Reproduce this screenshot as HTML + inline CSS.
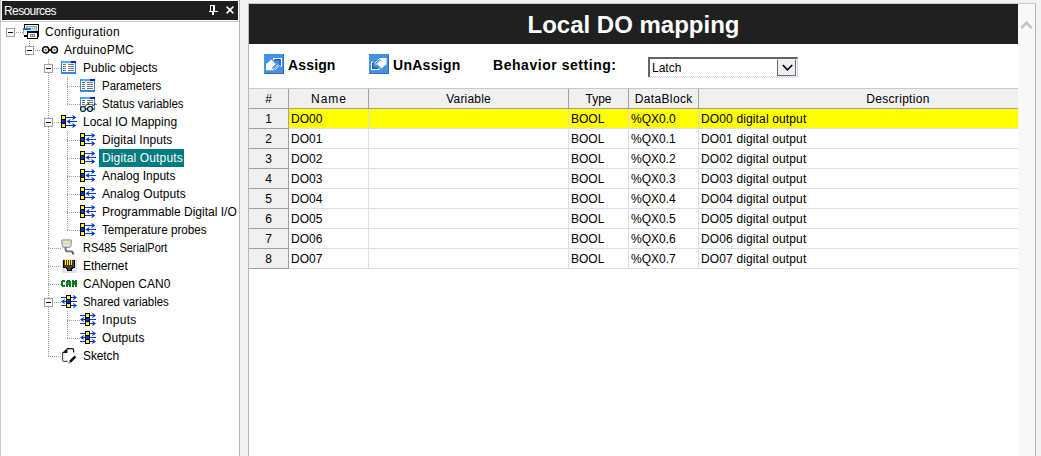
<!DOCTYPE html>
<html><head><meta charset="utf-8"><style>
html,body{margin:0;padding:0;}
body{width:1041px;height:456px;overflow:hidden;position:relative;background:#f2f2f2;font-family:"Liberation Sans",sans-serif;}
div{box-sizing:border-box;}
#lp{position:absolute;left:0;top:0;width:239px;height:456px;background:#fff;border-left:1px solid #c8c8c8;}
#lphead{position:absolute;left:2px;top:1px;width:236px;height:19px;background:#1f1f1f;color:#fff;font-size:12px;line-height:19px;padding-left:2px;padding-top:1px;}
#lpborder{position:absolute;left:239px;top:0px;width:1px;height:456px;background:#b8b8b8;}
#lptop{position:absolute;left:1px;top:21px;width:238px;height:1px;background:#c8c8c8;}
.ebox{position:absolute;width:9px;height:9px;border:1px solid #a0a0a0;background:#fff;}
.ebox i{position:absolute;left:1px;top:3px;width:5px;height:1px;background:#000;}
.hd{position:absolute;height:1px;background-image:linear-gradient(90deg,#a0a0a0 50%,transparent 50%);background-size:2px 1px;}
.vd{position:absolute;width:1px;background-image:linear-gradient(180deg,#a0a0a0 50%,transparent 50%);background-size:1px 2px;}
.ic{position:absolute;line-height:0;}
.ic svg{display:block;}
.tt{position:absolute;height:18px;line-height:18px;font-size:12px;color:#000;padding:0 2px 0 3px;white-space:nowrap;}
.tt.sel{background:#007b80;color:#fff;padding-right:1px;}
#rp{position:absolute;left:248px;top:3px;width:788px;height:453px;background:#fff;border-left:1px solid #b8b8b8;border-top:1px solid #c8c8c8;border-right:1px solid #b0b0b0;}
#title{position:absolute;left:249px;top:4px;width:769px;height:40px;background:#202020;color:#fff;font-weight:bold;font-size:24px;text-align:center;line-height:40px;padding-top:1px;}
#sb{position:absolute;left:1018px;top:4px;width:17px;height:452px;background:#f8f8f8;}
.tb{position:absolute;font-weight:bold;font-size:14px;color:#000;line-height:16px;white-space:nowrap;}
.btnic{position:absolute;width:20px;height:20px;}
#dd{position:absolute;left:648px;top:57px;width:150px;height:20px;background:#fff;border-top:2px solid #646460;border-left:2px solid #646460;border-right:1px solid #d0d8e6;}
#ddbot{position:absolute;left:650px;top:76px;width:148px;height:2px;background-image:linear-gradient(45deg,#c8d0e2 25%,transparent 25%,transparent 75%,#c8d0e2 75%),linear-gradient(45deg,#c8d0e2 25%,transparent 25%,transparent 75%,#c8d0e2 75%);background-size:2px 2px;background-position:0 0,1px 1px;}
#ddt{position:absolute;left:2px;top:2px;font-size:12px;line-height:14px;}
#ddb{position:absolute;left:127px;top:0px;width:19px;height:17px;background:#efefef;border:1px solid #6e6e6e;border-top-color:#f4f4f4;}
.th{position:absolute;top:89px;height:20px;padding-top:1px;background:#f0f0f0;border-right:1px solid #a0a0a0;border-bottom:1px solid #a0a0a0;font-size:12px;line-height:19px;text-align:center;white-space:nowrap;}
#thtop{position:absolute;left:249px;top:88px;width:769px;height:1px;background:#c8c8c8;}
.rh{position:absolute;left:249px;width:40px;height:20px;background:#f0f0f0;border-right:1px solid #a0a0a0;border-bottom:1px solid #a0a0a0;font-size:12px;line-height:19px;text-align:center;padding-top:1px;}
.td{position:absolute;height:20px;border-right:1px solid #d8dfea;border-bottom:1px solid #d8dfea;font-size:12px;line-height:19px;padding-left:2px;padding-top:1px;white-space:nowrap;overflow:hidden;}
.td.y{background:#ffff00;}
</style></head><body>
<div id="lp"></div>
<div id="lphead" style="letter-spacing:-0.6px">Resources</div>
<svg style="position:absolute;left:209px;top:5px" width="9" height="10" viewBox="0 0 9 10" shape-rendering="crispEdges">
<rect x="1" y="0" width="5" height="1" fill="#fff"/><rect x="1" y="0" width="1" height="6" fill="#fff"/><rect x="4" y="0" width="2" height="6" fill="#fff"/>
<rect x="0" y="6" width="9" height="1" fill="#fff"/><rect x="3" y="7" width="2" height="3" fill="#fff"/>
</svg>
<svg style="position:absolute;left:226px;top:6px" width="8" height="8" viewBox="0 0 8 8">
<path d="M0.6 0.6 L7.4 7.4 M7.4 0.6 L0.6 7.4" stroke="#fff" stroke-width="1.5"/>
</svg>
<div id="lptop"></div>
<div id="lpborder"></div>
<div class="hd" style="left:10px;top:32px;width:13px"></div>
<div class="hd" style="left:29px;top:50px;width:13px"></div>
<div class="hd" style="left:48px;top:68px;width:13px"></div>
<div class="hd" style="left:67px;top:86px;width:13px"></div>
<div class="hd" style="left:67px;top:104px;width:13px"></div>
<div class="hd" style="left:48px;top:122px;width:13px"></div>
<div class="hd" style="left:67px;top:140px;width:13px"></div>
<div class="hd" style="left:67px;top:158px;width:13px"></div>
<div class="hd" style="left:67px;top:176px;width:13px"></div>
<div class="hd" style="left:67px;top:194px;width:13px"></div>
<div class="hd" style="left:67px;top:212px;width:13px"></div>
<div class="hd" style="left:67px;top:230px;width:13px"></div>
<div class="hd" style="left:48px;top:248px;width:13px"></div>
<div class="hd" style="left:48px;top:266px;width:13px"></div>
<div class="hd" style="left:48px;top:284px;width:13px"></div>
<div class="hd" style="left:48px;top:302px;width:13px"></div>
<div class="hd" style="left:67px;top:320px;width:13px"></div>
<div class="hd" style="left:67px;top:338px;width:13px"></div>
<div class="hd" style="left:48px;top:356px;width:13px"></div>
<div class="vd" style="left:29px;top:41px;height:10px"></div>
<div class="vd" style="left:48px;top:59px;height:298px"></div>
<div class="vd" style="left:67px;top:77px;height:28px"></div>
<div class="vd" style="left:67px;top:131px;height:100px"></div>
<div class="vd" style="left:67px;top:311px;height:28px"></div>
<div class="ebox" style="left:6px;top:28px"><i></i></div>
<div class="ic" style="left:23px;top:24px"><svg width="16" height="15" viewBox="0 0 16 15" shape-rendering="crispEdges">
<rect x="1" y="0" width="15" height="13" fill="#000"/>
<rect x="2" y="1" width="13" height="11" fill="#f0f0f0"/>
<rect x="3" y="2" width="11" height="9" fill="#a0a0a0"/>
<rect x="4" y="3" width="9" height="1" fill="#a8f6f6"/>
<rect x="4" y="4" width="9" height="3" fill="#b8e8e8"/>
<rect x="9" y="4" width="1" height="1" fill="#909090"/><rect x="11" y="4" width="1" height="1" fill="#909090"/>
<rect x="0" y="4" width="8" height="2" fill="#1a78d0"/>
<rect x="0" y="6" width="1" height="5" fill="#b0b0b0"/>
<rect x="1" y="6" width="7" height="5" fill="#fafafa"/>
<rect x="1" y="11" width="4" height="1" fill="#000"/>
<rect x="4" y="7" width="11" height="8" fill="#000"/>
<rect x="5" y="7" width="9" height="2" fill="#000070"/>
<rect x="5" y="9" width="9" height="5" fill="#f6f6f6"/>
<rect x="7" y="10" width="5" height="3" fill="#8a8a8a"/>
<rect x="8" y="11" width="1" height="1" fill="#ffff00"/>
<rect x="10" y="11" width="1" height="1" fill="#ffff00"/>
</svg></div>
<div class="tt" style="left:42px;top:23px;letter-spacing:0.267px">Configuration</div>
<div class="ebox" style="left:25px;top:46px"><i></i></div>
<div class="ic" style="left:42px;top:46px"><svg width="17" height="9" viewBox="0 0 17 9">
<rect x="6" y="3.3" width="5" height="1.6" fill="#000"/>
<circle cx="3.7" cy="3.9" r="3.1" fill="#fff" stroke="#0a0a0a" stroke-width="1.5"/>
<circle cx="12.35" cy="3.9" r="3.1" fill="#fff" stroke="#0a0a0a" stroke-width="1.5"/>
<circle cx="3.7" cy="3.9" r="1.7" fill="#dde3f0"/>
<circle cx="12.35" cy="3.9" r="1.7" fill="#dde3f0"/>
<circle cx="3.7" cy="3.9" r="1.0" fill="#707070"/>
<circle cx="12.35" cy="3.9" r="1.0" fill="#707070"/>
</svg></div>
<div class="tt" style="left:61px;top:41px;letter-spacing:0.189px">ArduinoPMC</div>
<div class="ebox" style="left:44px;top:64px"><i></i></div>
<div class="ic" style="left:61px;top:61px"><svg width="15" height="13" viewBox="0 0 15 13" shape-rendering="crispEdges">
<rect x="0" y="0" width="15" height="13" fill="#3088e4"/>
<rect x="1" y="0" width="9" height="2" fill="#58a8f4"/>
<rect x="10" y="0" width="5" height="2" fill="#0a1ec8"/>
<rect x="1" y="2" width="13" height="9" fill="#fff"/>
<rect x="3" y="2" width="9" height="1" fill="#d0f4f0"/>
<rect x="2" y="3" width="3" height="1" fill="#747a6c"/><rect x="7" y="3" width="6" height="1" fill="#747a6c"/>
<rect x="2" y="5" width="3" height="1" fill="#747a6c"/><rect x="7" y="5" width="6" height="1" fill="#747a6c"/>
<rect x="2" y="7" width="3" height="1" fill="#747a6c"/><rect x="7" y="7" width="6" height="1" fill="#747a6c"/>
<rect x="2" y="9" width="3" height="1" fill="#747a6c"/><rect x="7" y="9" width="6" height="1" fill="#747a6c"/>
</svg></div>
<div class="tt" style="left:80px;top:59px;letter-spacing:0.038px">Public objects</div>
<div class="ic" style="left:80px;top:79px"><svg width="15" height="13" viewBox="0 0 15 13" shape-rendering="crispEdges">
<rect x="0" y="0" width="15" height="13" fill="#3088e4"/>
<rect x="1" y="0" width="9" height="2" fill="#58a8f4"/>
<rect x="10" y="0" width="5" height="2" fill="#0a1ec8"/>
<rect x="1" y="2" width="13" height="9" fill="#fff"/>
<rect x="3" y="2" width="9" height="1" fill="#d0f4f0"/>
<rect x="2" y="3" width="3" height="1" fill="#747a6c"/><rect x="7" y="3" width="6" height="1" fill="#747a6c"/>
<rect x="2" y="5" width="3" height="1" fill="#747a6c"/><rect x="7" y="5" width="6" height="1" fill="#747a6c"/>
<rect x="2" y="7" width="3" height="1" fill="#747a6c"/><rect x="7" y="7" width="6" height="1" fill="#747a6c"/>
<rect x="2" y="9" width="3" height="1" fill="#747a6c"/><rect x="7" y="9" width="6" height="1" fill="#747a6c"/>
</svg></div>
<div class="tt" style="left:99px;top:77px;transform:scaleX(0.955);transform-origin:3px 0">Parameters</div>
<div class="ic" style="left:80px;top:97px"><svg width="17" height="16" viewBox="0 0 17 16">
<g shape-rendering="crispEdges">
<rect x="0" y="0" width="15" height="13" fill="#3088e4"/>
<rect x="1" y="0" width="9" height="2" fill="#58a8f4"/>
<rect x="10" y="0" width="5" height="2" fill="#0a1ec8"/>
<rect x="1" y="2" width="13" height="9" fill="#fff"/>
<rect x="2" y="3" width="3" height="1" fill="#707868"/><rect x="7" y="3" width="6" height="1" fill="#707868"/>
<rect x="2" y="5" width="3" height="1" fill="#707868"/><rect x="7" y="5" width="6" height="1" fill="#707868"/>
<rect x="2" y="7" width="3" height="1" fill="#707868"/><rect x="7" y="7" width="6" height="1" fill="#707868"/>
</g>
<path d="M4.5 10 L8 6.5 L9.5 7.3 M11.5 10 L15 6.8 L16.5 7.5" fill="none" stroke="#111" stroke-width="1"/>
<circle cx="3" cy="12" r="2.5" fill="#a8e4fa" stroke="#0a0a0a" stroke-width="1.1"/>
<circle cx="10" cy="12" r="2.5" fill="#a8e4fa" stroke="#0a0a0a" stroke-width="1.1"/>
</svg></div>
<div class="tt" style="left:99px;top:95px;transform:scaleX(0.955);transform-origin:3px 0">Status variables</div>
<div class="ebox" style="left:44px;top:118px"><i></i></div>
<div class="ic" style="left:61px;top:115px"><svg width="16" height="13" viewBox="0 0 16 13" shape-rendering="crispEdges">
<rect x="0" y="0" width="5" height="13" fill="#000"/>
<rect x="1" y="1" width="3" height="3" fill="#ffff00"/>
<rect x="1" y="5" width="3" height="3" fill="#0033dd"/>
<rect x="1" y="9" width="3" height="3" fill="#ffff00"/>
<g fill="#0838d8">
<rect x="5" y="2" width="9" height="1"/><path d="M11.2 -0.3 L15.4 2.5 L11.2 5.3 L12.2 2.5 Z" shape-rendering="auto"/>
<rect x="7" y="6" width="9" height="1"/><path d="M9.6 3.7 L5.4 6.5 L9.6 9.3 L8.6 6.5 Z" shape-rendering="auto"/>
<rect x="5" y="10" width="9" height="1"/><path d="M11.2 7.7 L15.4 10.5 L11.2 13.3 L12.2 10.5 Z" shape-rendering="auto"/>
</g>
</svg></div>
<div class="tt" style="left:80px;top:113px;letter-spacing:0.0px">Local IO Mapping</div>
<div class="ic" style="left:80px;top:133px"><svg width="16" height="13" viewBox="0 0 16 13" shape-rendering="crispEdges">
<rect x="0" y="0" width="5" height="13" fill="#000"/>
<rect x="1" y="1" width="3" height="3" fill="#ffff00"/>
<rect x="1" y="5" width="3" height="3" fill="#0033dd"/>
<rect x="1" y="9" width="3" height="3" fill="#ffff00"/>
<g fill="#0838d8">
<rect x="5" y="2" width="9" height="1"/><path d="M11.2 -0.3 L15.4 2.5 L11.2 5.3 L12.2 2.5 Z" shape-rendering="auto"/>
<rect x="7" y="6" width="9" height="1"/><path d="M9.6 3.7 L5.4 6.5 L9.6 9.3 L8.6 6.5 Z" shape-rendering="auto"/>
<rect x="5" y="10" width="9" height="1"/><path d="M11.2 7.7 L15.4 10.5 L11.2 13.3 L12.2 10.5 Z" shape-rendering="auto"/>
</g>
</svg></div>
<div class="tt" style="left:99px;top:131px;letter-spacing:0.077px">Digital Inputs</div>
<div class="ic" style="left:80px;top:151px"><svg width="16" height="13" viewBox="0 0 16 13" shape-rendering="crispEdges">
<rect x="0" y="0" width="5" height="13" fill="#000"/>
<rect x="1" y="1" width="3" height="3" fill="#ffff00"/>
<rect x="1" y="5" width="3" height="3" fill="#0033dd"/>
<rect x="1" y="9" width="3" height="3" fill="#ffff00"/>
<g fill="#0838d8">
<rect x="5" y="2" width="9" height="1"/><path d="M11.2 -0.3 L15.4 2.5 L11.2 5.3 L12.2 2.5 Z" shape-rendering="auto"/>
<rect x="7" y="6" width="9" height="1"/><path d="M9.6 3.7 L5.4 6.5 L9.6 9.3 L8.6 6.5 Z" shape-rendering="auto"/>
<rect x="5" y="10" width="9" height="1"/><path d="M11.2 7.7 L15.4 10.5 L11.2 13.3 L12.2 10.5 Z" shape-rendering="auto"/>
</g>
</svg></div>
<div class="tt sel" style="left:99px;top:149px;letter-spacing:0.143px">Digital Outputs</div>
<div class="ic" style="left:80px;top:169px"><svg width="16" height="13" viewBox="0 0 16 13" shape-rendering="crispEdges">
<rect x="0" y="0" width="5" height="13" fill="#000"/>
<rect x="1" y="1" width="3" height="3" fill="#ffff00"/>
<rect x="1" y="5" width="3" height="3" fill="#0033dd"/>
<rect x="1" y="9" width="3" height="3" fill="#ffff00"/>
<g fill="#0838d8">
<rect x="5" y="2" width="9" height="1"/><path d="M11.2 -0.3 L15.4 2.5 L11.2 5.3 L12.2 2.5 Z" shape-rendering="auto"/>
<rect x="7" y="6" width="9" height="1"/><path d="M9.6 3.7 L5.4 6.5 L9.6 9.3 L8.6 6.5 Z" shape-rendering="auto"/>
<rect x="5" y="10" width="9" height="1"/><path d="M11.2 7.7 L15.4 10.5 L11.2 13.3 L12.2 10.5 Z" shape-rendering="auto"/>
</g>
</svg></div>
<div class="tt" style="left:99px;top:167px;letter-spacing:0.0px">Analog Inputs</div>
<div class="ic" style="left:80px;top:187px"><svg width="16" height="13" viewBox="0 0 16 13" shape-rendering="crispEdges">
<rect x="0" y="0" width="5" height="13" fill="#000"/>
<rect x="1" y="1" width="3" height="3" fill="#ffff00"/>
<rect x="1" y="5" width="3" height="3" fill="#0033dd"/>
<rect x="1" y="9" width="3" height="3" fill="#ffff00"/>
<g fill="#0838d8">
<rect x="5" y="2" width="9" height="1"/><path d="M11.2 -0.3 L15.4 2.5 L11.2 5.3 L12.2 2.5 Z" shape-rendering="auto"/>
<rect x="7" y="6" width="9" height="1"/><path d="M9.6 3.7 L5.4 6.5 L9.6 9.3 L8.6 6.5 Z" shape-rendering="auto"/>
<rect x="5" y="10" width="9" height="1"/><path d="M11.2 7.7 L15.4 10.5 L11.2 13.3 L12.2 10.5 Z" shape-rendering="auto"/>
</g>
</svg></div>
<div class="tt" style="left:99px;top:185px;letter-spacing:0.077px">Analog Outputs</div>
<div class="ic" style="left:80px;top:205px"><svg width="16" height="13" viewBox="0 0 16 13" shape-rendering="crispEdges">
<rect x="0" y="0" width="5" height="13" fill="#000"/>
<rect x="1" y="1" width="3" height="3" fill="#ffff00"/>
<rect x="1" y="5" width="3" height="3" fill="#0033dd"/>
<rect x="1" y="9" width="3" height="3" fill="#ffff00"/>
<g fill="#0838d8">
<rect x="5" y="2" width="9" height="1"/><path d="M11.2 -0.3 L15.4 2.5 L11.2 5.3 L12.2 2.5 Z" shape-rendering="auto"/>
<rect x="7" y="6" width="9" height="1"/><path d="M9.6 3.7 L5.4 6.5 L9.6 9.3 L8.6 6.5 Z" shape-rendering="auto"/>
<rect x="5" y="10" width="9" height="1"/><path d="M11.2 7.7 L15.4 10.5 L11.2 13.3 L12.2 10.5 Z" shape-rendering="auto"/>
</g>
</svg></div>
<div class="tt" style="left:99px;top:203px;letter-spacing:0px">Programmable Digital I/O</div>
<div class="ic" style="left:80px;top:223px"><svg width="16" height="13" viewBox="0 0 16 13" shape-rendering="crispEdges">
<rect x="0" y="0" width="5" height="13" fill="#000"/>
<rect x="1" y="1" width="3" height="3" fill="#ffff00"/>
<rect x="1" y="5" width="3" height="3" fill="#0033dd"/>
<rect x="1" y="9" width="3" height="3" fill="#ffff00"/>
<g fill="#0838d8">
<rect x="5" y="2" width="9" height="1"/><path d="M11.2 -0.3 L15.4 2.5 L11.2 5.3 L12.2 2.5 Z" shape-rendering="auto"/>
<rect x="7" y="6" width="9" height="1"/><path d="M9.6 3.7 L5.4 6.5 L9.6 9.3 L8.6 6.5 Z" shape-rendering="auto"/>
<rect x="5" y="10" width="9" height="1"/><path d="M11.2 7.7 L15.4 10.5 L11.2 13.3 L12.2 10.5 Z" shape-rendering="auto"/>
</g>
</svg></div>
<div class="tt" style="left:99px;top:221px;transform:scaleX(0.975);transform-origin:3px 0">Temperature probes</div>
<div class="ic" style="left:61px;top:239px"><svg width="15" height="17" viewBox="0 0 15 17">
<path d="M0.6 1.6 Q0.6 0.9 1.6 0.9 L9.6 0.9 Q10.6 0.9 10.6 1.6 L9.8 7.4 Q9.4 8.4 8.2 8.4 L3 8.4 Q1.8 8.4 1.4 7.4 Z" fill="#d2d2d2" stroke="#8a8a8a" stroke-width="0.9"/>
<rect x="2" y="0.6" width="3" height="1.2" fill="#f2b04a"/><rect x="5" y="0.6" width="1" height="1.2" fill="#b8d070"/><rect x="6" y="0.6" width="3" height="1.2" fill="#f2b04a"/>
<rect x="2" y="2.4" width="7" height="1" fill="#eef2f8"/>
<rect x="2.5" y="5.5" width="6" height="1" fill="#efefef"/>
<path d="M4.6 8.6 L4.6 10.6 Q4.8 12.4 7.5 12.4 L10 12.4 Q12.2 12.6 12.4 15.6" fill="none" stroke="#5e5e5e" stroke-width="1.9"/>
<path d="M5.2 9 L5.2 10.6 Q5.4 11.9 7.5 11.9 L10 11.9" fill="none" stroke="#b8b8b8" stroke-width="0.7"/>
</svg></div>
<div class="tt" style="left:80px;top:239px;transform:scaleX(0.91);transform-origin:3px 0">RS485 SerialPort</div>
<div class="ic" style="left:62px;top:259px"><svg width="15" height="14" viewBox="0 0 15 14" shape-rendering="crispEdges">
<rect x="0" y="0" width="15" height="14" fill="#dfe3ee"/>
<path d="M1 1 L13 1 L13 9 L11 9 L11 10 L10 10 L10 12 L5 12 L5 10 L4 10 L4 9 L1 9 Z" fill="#000"/>
<path d="M2 1 L12 1 L12 8 L10 8 L10 9 L9 9 L9 11 L6 11 L6 9 L5 9 L5 8 L2 8 Z" fill="#4a3b38"/>
<rect x="3" y="1" width="1" height="5" fill="#ffe800"/>
<rect x="5" y="1" width="1" height="5" fill="#ffe800"/>
<rect x="7" y="1" width="1" height="5" fill="#ffe800"/>
<rect x="9" y="1" width="1" height="5" fill="#ffe800"/>
</svg></div>
<div class="tt" style="left:80px;top:257px;letter-spacing:-0.086px">Ethernet</div>
<div class="ic" style="left:61px;top:280px"><svg width="16" height="7" viewBox="0 0 16 7" shape-rendering="crispEdges">
<g fill="#087a1e">
<rect x="1" y="0" width="3" height="2"/><rect x="0" y="1" width="2" height="5"/><rect x="1" y="5" width="3" height="2"/>
<rect x="6" y="0" width="3" height="2"/><rect x="5" y="1" width="2" height="6"/><rect x="8" y="1" width="2" height="6"/><rect x="7" y="4" width="1" height="1"/>
<rect x="11" y="0" width="2" height="7"/><rect x="14" y="0" width="2" height="7"/><rect x="13" y="1" width="1" height="4"/>
</g>
<rect x="7" y="2" width="1" height="2" fill="#2a9a9a"/>
</svg></div>
<div class="tt" style="left:80px;top:275px;letter-spacing:0.0px">CANopen CAN0</div>
<div class="ebox" style="left:44px;top:298px"><i></i></div>
<div class="ic" style="left:61px;top:295px"><svg width="16" height="13" viewBox="0 0 16 13" shape-rendering="crispEdges">
<g fill="#0838d8">
<rect x="0" y="2" width="14" height="1"/><path d="M12 -0.3 L16 2.5 L12 5.3 L13 2.5 Z" shape-rendering="auto"/>
<rect x="2" y="6" width="14" height="1"/><path d="M4 3.7 L0 6.5 L4 9.3 L3 6.5 Z" shape-rendering="auto"/>
<rect x="0" y="10" width="14" height="1"/><path d="M12 7.7 L16 10.5 L12 13.3 L13 10.5 Z" shape-rendering="auto"/>
</g>
<rect x="5" y="0" width="5" height="13" fill="#000"/>
<rect x="6" y="1" width="3" height="3" fill="#ffff00"/>
<rect x="6" y="5" width="3" height="3" fill="#0033dd"/>
<rect x="6" y="9" width="3" height="3" fill="#ffff00"/>
</svg></div>
<div class="tt" style="left:80px;top:293px;transform:scaleX(0.952);transform-origin:3px 0">Shared variables</div>
<div class="ic" style="left:80px;top:313px"><svg width="16" height="13" viewBox="0 0 16 13" shape-rendering="crispEdges">
<g fill="#0838d8">
<rect x="0" y="2" width="14" height="1"/><path d="M12 -0.3 L16 2.5 L12 5.3 L13 2.5 Z" shape-rendering="auto"/>
<rect x="2" y="6" width="14" height="1"/><path d="M4 3.7 L0 6.5 L4 9.3 L3 6.5 Z" shape-rendering="auto"/>
<rect x="0" y="10" width="14" height="1"/><path d="M12 7.7 L16 10.5 L12 13.3 L13 10.5 Z" shape-rendering="auto"/>
</g>
<rect x="5" y="0" width="5" height="13" fill="#000"/>
<rect x="6" y="1" width="3" height="3" fill="#ffff00"/>
<rect x="6" y="5" width="3" height="3" fill="#0033dd"/>
<rect x="6" y="9" width="3" height="3" fill="#ffff00"/>
</svg></div>
<div class="tt" style="left:99px;top:311px;letter-spacing:0.32px">Inputs</div>
<div class="ic" style="left:80px;top:331px"><svg width="16" height="13" viewBox="0 0 16 13" shape-rendering="crispEdges">
<g fill="#0838d8">
<rect x="0" y="2" width="14" height="1"/><path d="M12 -0.3 L16 2.5 L12 5.3 L13 2.5 Z" shape-rendering="auto"/>
<rect x="2" y="6" width="14" height="1"/><path d="M4 3.7 L0 6.5 L4 9.3 L3 6.5 Z" shape-rendering="auto"/>
<rect x="0" y="10" width="14" height="1"/><path d="M12 7.7 L16 10.5 L12 13.3 L13 10.5 Z" shape-rendering="auto"/>
</g>
<rect x="5" y="0" width="5" height="13" fill="#000"/>
<rect x="6" y="1" width="3" height="3" fill="#ffff00"/>
<rect x="6" y="5" width="3" height="3" fill="#0033dd"/>
<rect x="6" y="9" width="3" height="3" fill="#ffff00"/>
</svg></div>
<div class="tt" style="left:99px;top:329px;letter-spacing:0.067px">Outputs</div>
<div class="ic" style="left:62px;top:348px"><svg width="16" height="16" viewBox="0 0 16 16">
<path d="M5 0.7 L10 0.7 Q11.6 0.7 11.6 2.3 L11.6 4.6" fill="none" stroke="#111" stroke-width="1.3"/>
<path d="M0.7 4.5 L0.7 12 Q0.7 13.3 2.4 13.4 L5.6 13.4" fill="none" stroke="#4a4a4a" stroke-width="1.3"/>
<path d="M1.4 5 L3 5 L3 12.7 L1.4 12.7 Z" fill="#f0f4fc"/>
<path d="M0.1 4.9 L5.4 -0.1 L5.4 4.9 Z" fill="#111"/>
<path d="M13.4 8.4 L8 13.8" stroke="#111" stroke-width="2.5"/>
<path d="M7.6 14.3 L6.6 15.6" stroke="#555" stroke-width="1.1"/>
</svg></div>
<div class="tt" style="left:80px;top:347px;letter-spacing:-0.12px">Sketch</div>
<div id="rp"></div>
<div id="title">Local DO mapping</div>
<div id="sb"><svg style="position:absolute;left:2px;top:14px" width="13" height="13" viewBox="0 0 13 13"><path d="M1.3 10.2 L6.5 4.6 L11.7 10.2" fill="none" stroke="#c2c2c2" stroke-width="2.6"/></svg></div>
<svg class="btnic" style="left:264px;top:54px" viewBox="0 0 20 20" shape-rendering="crispEdges">
<defs><pattern id="dith" width="2" height="2" patternUnits="userSpaceOnUse"><rect width="2" height="2" fill="#3a88dc"/><rect width="1" height="1" fill="#5a9ef0"/><rect x="1" y="1" width="1" height="1" fill="#5a9ef0"/></pattern></defs>
<rect x="0" y="0" width="20" height="20" fill="url(#dith)"/>
<rect x="1" y="1" width="18" height="18" fill="#4490e4"/>
<rect x="19" y="1" width="1" height="19" fill="#2a6cc4"/><rect x="1" y="19" width="19" height="1" fill="#2a6cc4"/>
<g shape-rendering="auto">
<path d="M9.5 6 V4.5 H17.5 V12 H16" fill="none" stroke="#fff" stroke-width="1.1"/>
<path d="M10.5 5.8 H16 V11.5" fill="none" stroke="#1f5db5" stroke-width="1.4"/>
<path d="M2 16.2 V9.5 H3 L7.2 5.6 L11.8 10 L8 14 L10 16.2 Z" fill="#fff"/>
<path d="M9 15.6 L14.2 10.4 M10.6 16.2 L15.6 11.2" stroke="#fff" stroke-width="0.9"/>
</g>
</svg>
<div class="tb" style="left:288px;top:57px;letter-spacing:0.15px">Assign</div>
<svg class="btnic" style="left:369px;top:54px" viewBox="0 0 20 20" shape-rendering="crispEdges">
<rect x="0" y="0" width="20" height="20" fill="url(#dith)"/>
<rect x="1" y="1" width="18" height="18" fill="#4490e4"/>
<rect x="19" y="1" width="1" height="19" fill="#2a6cc4"/><rect x="1" y="19" width="19" height="1" fill="#2a6cc4"/>
<g shape-rendering="auto">
<path d="M4 8 H2.5 V15.5 H10 V14" fill="none" stroke="#fff" stroke-width="1.1"/>
<path d="M3.8 9 V14.2 H9.2" fill="none" stroke="#1f5db5" stroke-width="1.4"/>
<path d="M10 4 H17.5 V11 L16.5 11 L12.5 14.5 L8 10 L12 6 Z" fill="#fff"/>
<path d="M5.5 9.5 L10.5 4.5 M6.6 11 L11.6 6" stroke="#fff" stroke-width="0.9"/>
</g>
</svg>
<div class="tb" style="left:393px;top:57px;letter-spacing:0.28px">UnAssign</div>
<div class="tb" style="left:493px;top:57px;letter-spacing:0.54px">Behavior setting:</div>
<div id="dd"><div id="ddt">Latch</div><div id="ddb"><svg style="position:absolute;left:4px;top:4px" width="11" height="8" viewBox="0 0 11 8"><path d="M0.8 1 L5.5 5.8 L10.2 1" fill="none" stroke="#000" stroke-width="1.7"/></svg></div></div><div id="ddbot"></div>
<div id="thtop"></div>
<div class="th" style="left:249px;width:40px;letter-spacing:0px;padding-left:0px">#</div><div class="th" style="left:289px;width:80px;letter-spacing:1.0px;padding-left:1.0px">Name</div><div class="th" style="left:369px;width:200px;letter-spacing:0.2px;padding-left:0.2px">Variable</div><div class="th" style="left:569px;width:60px;letter-spacing:0px;padding-left:0px">Type</div><div class="th" style="left:629px;width:70px;letter-spacing:0.37px;padding-left:0.37px">DataBlock</div><div class="th" style="left:699px;width:319px;border-right:none;overflow:hidden"><div style="width:398px;text-align:center;letter-spacing:0.3px">Description</div></div>
<div class="rh" style="top:109px">1</div><div class="td y" style="left:289px;top:109px;width:80px;letter-spacing:0px">DO00</div><div class="td y" style="left:369px;top:109px;width:200px;letter-spacing:0px"></div><div class="td y" style="left:569px;top:109px;width:60px;letter-spacing:0px">BOOL</div><div class="td y" style="left:629px;top:109px;width:70px;letter-spacing:0px">%QX0.0</div><div class="td y" style="left:699px;top:109px;width:319px;letter-spacing:0.14px;border-right:none">DO00 digital output</div><div class="rh" style="top:129px">2</div><div class="td" style="left:289px;top:129px;width:80px;letter-spacing:0px">DO01</div><div class="td" style="left:369px;top:129px;width:200px;letter-spacing:0px"></div><div class="td" style="left:569px;top:129px;width:60px;letter-spacing:0px">BOOL</div><div class="td" style="left:629px;top:129px;width:70px;letter-spacing:0px">%QX0.1</div><div class="td" style="left:699px;top:129px;width:319px;letter-spacing:0.14px;border-right:none">DO01 digital output</div><div class="rh" style="top:149px">3</div><div class="td" style="left:289px;top:149px;width:80px;letter-spacing:0px">DO02</div><div class="td" style="left:369px;top:149px;width:200px;letter-spacing:0px"></div><div class="td" style="left:569px;top:149px;width:60px;letter-spacing:0px">BOOL</div><div class="td" style="left:629px;top:149px;width:70px;letter-spacing:0px">%QX0.2</div><div class="td" style="left:699px;top:149px;width:319px;letter-spacing:0.14px;border-right:none">DO02 digital output</div><div class="rh" style="top:169px">4</div><div class="td" style="left:289px;top:169px;width:80px;letter-spacing:0px">DO03</div><div class="td" style="left:369px;top:169px;width:200px;letter-spacing:0px"></div><div class="td" style="left:569px;top:169px;width:60px;letter-spacing:0px">BOOL</div><div class="td" style="left:629px;top:169px;width:70px;letter-spacing:0px">%QX0.3</div><div class="td" style="left:699px;top:169px;width:319px;letter-spacing:0.14px;border-right:none">DO03 digital output</div><div class="rh" style="top:189px">5</div><div class="td" style="left:289px;top:189px;width:80px;letter-spacing:0px">DO04</div><div class="td" style="left:369px;top:189px;width:200px;letter-spacing:0px"></div><div class="td" style="left:569px;top:189px;width:60px;letter-spacing:0px">BOOL</div><div class="td" style="left:629px;top:189px;width:70px;letter-spacing:0px">%QX0.4</div><div class="td" style="left:699px;top:189px;width:319px;letter-spacing:0.14px;border-right:none">DO04 digital output</div><div class="rh" style="top:209px">6</div><div class="td" style="left:289px;top:209px;width:80px;letter-spacing:0px">DO05</div><div class="td" style="left:369px;top:209px;width:200px;letter-spacing:0px"></div><div class="td" style="left:569px;top:209px;width:60px;letter-spacing:0px">BOOL</div><div class="td" style="left:629px;top:209px;width:70px;letter-spacing:0px">%QX0.5</div><div class="td" style="left:699px;top:209px;width:319px;letter-spacing:0.14px;border-right:none">DO05 digital output</div><div class="rh" style="top:229px">7</div><div class="td" style="left:289px;top:229px;width:80px;letter-spacing:0px">DO06</div><div class="td" style="left:369px;top:229px;width:200px;letter-spacing:0px"></div><div class="td" style="left:569px;top:229px;width:60px;letter-spacing:0px">BOOL</div><div class="td" style="left:629px;top:229px;width:70px;letter-spacing:0px">%QX0.6</div><div class="td" style="left:699px;top:229px;width:319px;letter-spacing:0.14px;border-right:none">DO06 digital output</div><div class="rh" style="top:249px">8</div><div class="td" style="left:289px;top:249px;width:80px;letter-spacing:0px">DO07</div><div class="td" style="left:369px;top:249px;width:200px;letter-spacing:0px"></div><div class="td" style="left:569px;top:249px;width:60px;letter-spacing:0px">BOOL</div><div class="td" style="left:629px;top:249px;width:70px;letter-spacing:0px">%QX0.7</div><div class="td" style="left:699px;top:249px;width:319px;letter-spacing:0.14px;border-right:none">DO07 digital output</div>
</body></html>
